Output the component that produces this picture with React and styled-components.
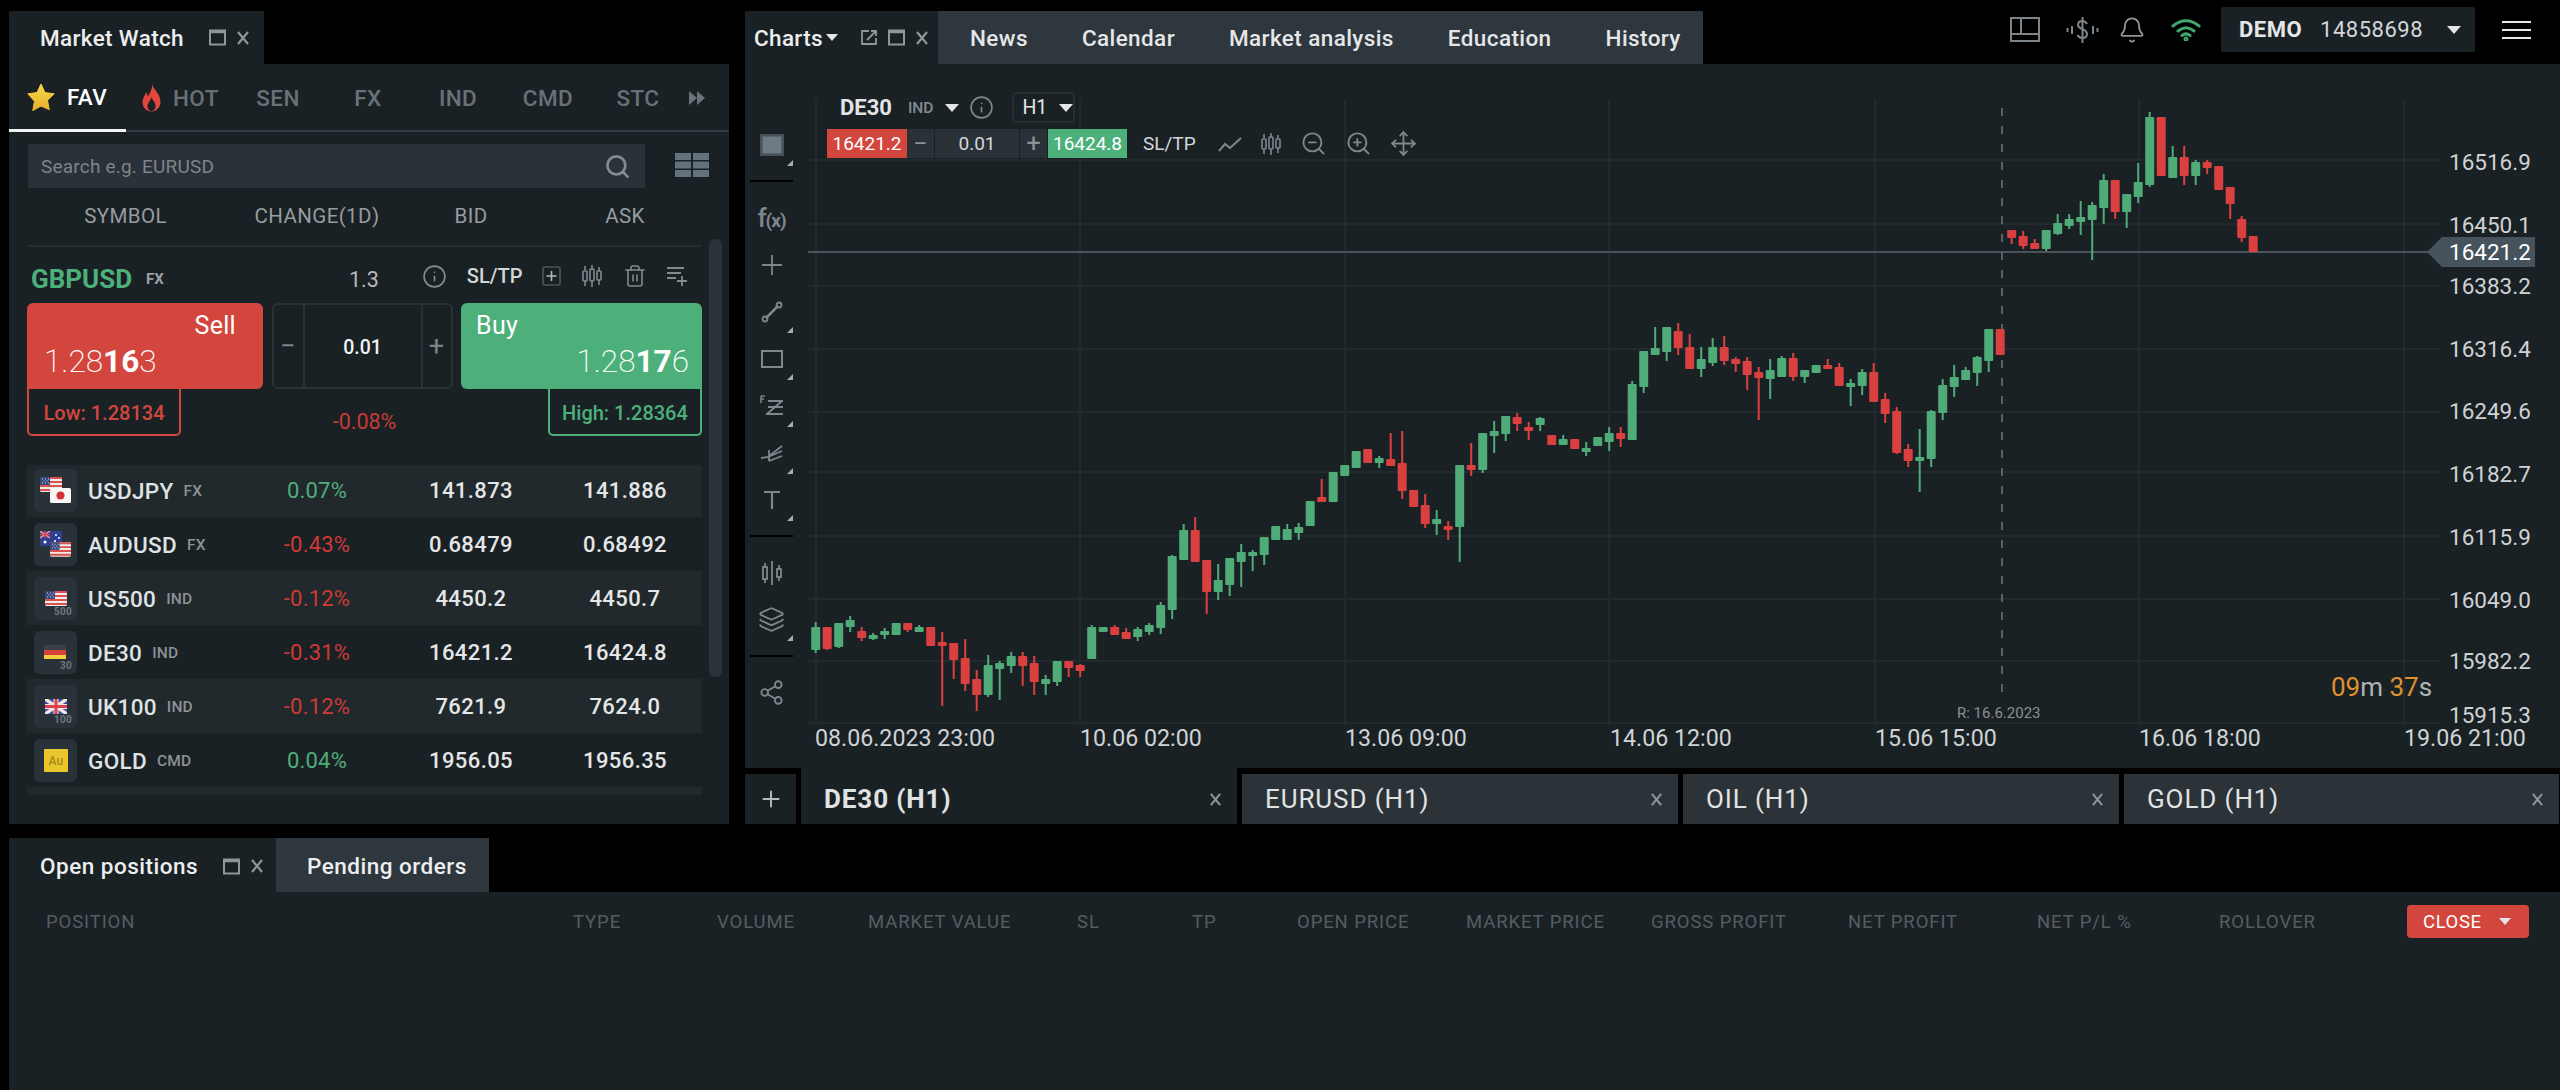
import React from 'react';
import styled, { createGlobalStyle } from 'styled-components';
import { Search, Info, Trash2, Bell, Layers, ZoomIn, ZoomOut, Move, Share2, Plus } from 'lucide-react';

const RED = '#d2463e';
const GREEN = '#4db07b';
const PANEL = '#1a2125';
const STRIP = '#2f373e';

const GlobalStyle = createGlobalStyle`
    html, body {
        margin: 0;
        background: #000;
    }
    body {
        font-family: Roboto, "Liberation Sans", sans-serif;
    }
    * {
        box-sizing: border-box;
    }
`;

const Page = styled.div`
    width: 2560px;
    height: 1090px;
    padding-left: 9px;
    background: #000;
    overflow: hidden;
`;

const TopArea = styled.div`
    display: flex;
    gap: 16px;
    height: 824px;
`;

const MarketColumn = styled.div`
    width: 720px;
    padding-top: 11px;
    display: flex;
    flex-direction: column;
`;

const ChartColumn = styled.div`
    width: 1815px;
    display: flex;
    flex-direction: column;
`;

const WindowTab = styled.div`
    height: 53px;
    width: ${props => props.$width}px;
    padding-left: ${props => props.$pad || 31}px;
    display: flex;
    align-items: center;
    flex-shrink: 0;
    background: ${props => props.$muted ? STRIP : PANEL};
    color: #eceeef;
    font-size: 22.5px;
    font-weight: 500;
    letter-spacing: 0.35px;
`;

const WindowControls = styled.div`
    display: flex;
    align-items: center;
    gap: ${props => props.$gap || 10}px;
    margin-left: ${props => props.$left}px;
    color: #8f9599;
`;

const MarketPanel = styled.div`
    flex: 1;
    background: ${PANEL};
    position: relative;
    display: flex;
    flex-direction: column;
`;

const CategoryTabs = styled.div`
    height: 68px;
    display: flex;
    border-bottom: 2px solid #333c43;
`;

const CategoryTab = styled.div`
    width: ${props => props.$width || 90}px;
    height: 68px;
    display: flex;
    align-items: center;
    justify-content: ${props => props.$left ? 'flex-start' : 'center'};
    gap: 12px;
    padding-left: ${props => props.$pad || 0}px;
    color: ${props => props.$active ? '#fff' : '#697177'};
    border-bottom: ${props => props.$active ? '3px solid #f2f3f4' : 'none'};
    font-size: 22.5px;
    font-weight: 500;
    letter-spacing: 0.4px;
`;

const SearchRow = styled.div`
    display: flex;
    align-items: center;
    padding: 12px 0 0 19px;
`;

const SearchBox = styled.div`
    width: 617px;
    height: 44px;
    padding: 0 14px 0 13px;
    display: flex;
    align-items: center;
    justify-content: space-between;
    background: #2a3138;
    color: #7e858a;
    font-size: 19px;
    letter-spacing: 0.2px;
`;

const GridToggle = styled.svg`
    margin-left: 30px;
    margin-top: -3px;
`;

const QuoteGrid = styled.div`
    display: grid;
    grid-template-columns: 213px 154px 154px 154px;
    align-items: center;
`;

const ColumnHeader = styled(QuoteGrid)`
    height: 59px;
    margin: 0 27px 0 18px;
    width: 675px;
    border-bottom: 2px solid #262e34;
    padding-bottom: 2px;
    color: #969c9f;
    font-size: 20.5px;
    letter-spacing: 0.4px;
    text-align: center;

    & > span:first-child {
        padding-right: 16px;
    }
`;

const ScrollThumb = styled.div`
    position: absolute;
    left: 700px;
    top: 175px;
    width: 13px;
    height: 438px;
    border-radius: 6px;
    background: #2a3339;
`;

const SymbolHead = styled.div`
    height: 56px;
    width: 675px;
    margin-left: 18px;
    padding: 8px 14px 0 4px;
    display: flex;
    align-items: center;
`;

const SymbolName = styled.div`
    color: ${GREEN};
    font-size: 26px;
    font-weight: 700;
    width: 115px;
`;

const SymbolTag = styled.div`
    color: #9aa0a3;
    font-size: 15px;
    font-weight: 700;
    width: 203px;
`;

const Spread = styled.div`
    color: #b6babc;
    font-size: 21.5px;
    width: 73px;
`;

const HeadTools = styled.div`
    display: flex;
    align-items: center;
    flex: 1;
    justify-content: space-between;
    color: #838a8f;
    margin-top: -6px;
`;

const SlTp = styled.span`
    color: #d4d7d8;
    font-size: 20px;
    font-weight: 500;
`;

const TradeRow = styled.div`
    width: 675px;
    margin-left: 18px;
    display: flex;
    justify-content: space-between;
`;

const TradeButton = styled.div`
    height: 86px;
    width: ${props => props.$buy ? 241 : 236}px;
    padding: ${props => props.$buy ? '7px 13px 0 15px' : '7px 27px 0 17px'};
    display: flex;
    flex-direction: column;
    background: ${props => props.$buy ? GREEN : RED};
    border-radius: ${props => props.$buy ? '6px 6px 0 6px' : '6px 6px 6px 0'};
    color: #fff;
`;

const TradeLabel = styled.div`
    font-size: 25px;
    line-height: 32px;
    text-align: ${props => props.$buy ? 'left' : 'right'};
    letter-spacing: 0.3px;
`;

const TradePrice = styled.div`
    font-size: 31.5px;
    line-height: 40px;
    font-weight: 200;
    text-align: ${props => props.$buy ? 'right' : 'left'};

    b {
        font-weight: 700;
    }
`;

const Stepper = styled.div`
    width: 181px;
    height: 86px;
    display: grid;
    grid-template-columns: 29px 1fr 28px;
    align-items: center;
    text-align: center;
    border: 2px solid #2a3238;
    border-radius: 6px;
    color: #7c8388;
    font-size: 27px;
`;

const StepperValue = styled.div`
    height: 100%;
    display: flex;
    align-items: center;
    justify-content: center;
    padding-top: 3px;
    border-left: 2px solid #2a3238;
    border-right: 2px solid #2a3238;
    color: #f1f2f3;
    font-size: 19.5px;
    font-weight: 500;
`;

const RangeRow = styled.div`
    width: 675px;
    margin-left: 18px;
    height: 47px;
    display: flex;
    justify-content: space-between;
`;

const RangeBox = styled.div`
    width: 154px;
    display: flex;
    align-items: center;
    justify-content: center;
    border: 2px solid ${props => props.$color};
    border-top: none;
    border-radius: 0 0 5px 5px;
    color: ${props => props.$color};
    font-size: 20px;
    font-weight: 500;
    padding-top: 3px;
`;

const DayChange = styled.div`
    color: #c93a34;
    font-size: 21.5px;
    padding-top: 20px;
`;

const QuoteList = styled.div`
    height: 330px;
    width: 675px;
    margin: 29px 0 0 18px;
    overflow: hidden;
`;

const QuoteRows = styled.div`
    margin-top: -2px;
`;

const QuoteRow = styled(QuoteGrid)`
    height: 54px;
    padding-top: 1px;
    background: ${props => props.$odd ? '#21292d' : 'transparent'};
    text-align: center;
    font-size: 22px;
`;

const QuoteSymbol = styled.div`
    display: flex;
    align-items: center;
    padding-left: 7px;
    color: #dfe1e3;
    font-size: 22.5px;
    font-weight: 500;
    letter-spacing: 0.3px;
`;

const QuoteIcon = styled.div`
    width: 43px;
    height: 43px;
    margin-right: 11px;
    border-radius: 6px;
    background: #2a3239;
    flex-shrink: 0;
`;

const QuoteTag = styled.span`
    margin-left: 10px;
    color: #8c9295;
    font-size: 15.5px;
    font-weight: 500;
    letter-spacing: 0.2px;
`;

const QuoteChange = styled.div`
    color: ${props => props.$up ? '#4fae79' : '#cf3a36'};
    letter-spacing: 0.2px;
`;

const QuotePrice = styled.div`
    color: #e4e6e7;
    font-weight: 500;
    letter-spacing: 0.4px;
`;

const ChartHeader = styled.div`
    height: 64px;
    display: flex;
    align-items: flex-end;
`;

const NewsStrip = styled.div`
    height: 53px;
    width: 765px;
    padding-left: 32px;
    display: flex;
    align-items: center;
    gap: 54px;
    background: ${STRIP};
    color: #e4e6e8;
    font-size: 22.5px;
    font-weight: 500;
    letter-spacing: 0.4px;
`;

const AccountTools = styled.div`
    align-self: flex-start;
    margin-left: auto;
    padding-top: 7px;
    display: flex;
    align-items: center;
    height: 52px;
`;

const AccountBox = styled.div`
    width: 254px;
    height: 45px;
    margin-left: 20px;
    padding-left: 18px;
    display: flex;
    align-items: center;
    background: ${PANEL};
    border-radius: 3px 3px 0 0;
    color: #d5d8da;
    font-size: 22px;
    letter-spacing: 0.5px;

    b {
        font-weight: 700;
        font-size: 22px;
        margin-right: 18px;
        color: #e4e6e7;
    }
`;

const Hamburger = styled.div`
    width: 29px;
    margin: 0 29px 0 27px;
    display: flex;
    flex-direction: column;
    gap: 6px;

    i {
        display: block;
        height: 2px;
        background: #e6e8e9;
    }
`;

const ChartBody = styled.div`
    height: 704px;
    display: flex;
    background: ${PANEL};
`;

const ToolRail = styled.div`
    width: 61px;
    padding: 57px 0 0 5px;
    flex-shrink: 0;
    color: #7f878c;
`;

const ToolButton = styled.div`
    position: relative;
    width: 43px;
    height: 47px;
    display: flex;
    align-items: center;
    justify-content: center;
    color: #7f878c;
    font-size: 21px;
    font-weight: 500;

    &::after {
        content: '';
        display: ${props => props.$corner ? 'block' : 'none'};
        position: absolute;
        right: 0;
        bottom: 2px;
        width: 6px;
        height: 6px;
        background: #a7adb0;
        clip-path: polygon(100% 0, 100% 100%, 0 100%);
    }
`;

const RailSeparator = styled.div`
    width: 43px;
    height: 2px;
    margin: 12px 0;
    background: #000;
`;

const ChartCanvas = styled.div`
    position: relative;
    flex: 1;

    svg {
        display: block;
    }
`;

const ChartOverlay = styled.div`
    position: absolute;
    left: 21px;
    top: 28px;
    display: flex;
    flex-direction: column;
    gap: 6px;
    color: #d4d7d9;
`;

const OverlayTitle = styled.div`
    height: 31px;
    padding-left: 13px;
    display: flex;
    align-items: center;
    font-size: 22px;
    font-weight: 700;
    color: #e2e4e6;
`;

const OverlayTag = styled.span`
    margin-left: 16px;
    color: #868c90;
    font-size: 15.5px;
    font-weight: 500;
`;

const Caret = styled.span`
    display: inline-block;
    width: 0;
    height: 0;
    margin-left: ${props => props.$left || 0}px;
    border-left: ${props => props.$size || 7}px solid transparent;
    border-right: ${props => props.$size || 7}px solid transparent;
    border-top: ${props => (props.$size || 7) + 1}px solid ${props => props.$color || '#e3e5e6'};
`;

const OverlayInfo = styled(Info)`
    margin-left: 10px;
    color: #7f878c;
`;

const IntervalBox = styled.div`
    width: 63px;
    height: 31px;
    margin-left: 18px;
    padding-left: 8px;
    display: flex;
    align-items: center;
    border: 2px solid #262e33;
    border-radius: 4px;
    font-size: 19.5px;
    font-weight: 400;
`;

const OverlayPrices = styled.div`
    height: 29px;
    display: flex;
    align-items: center;
    font-size: 19px;
`;

const OverlayPrice = styled.div`
    width: ${props => props.$buy ? 79 : 80}px;
    height: 29px;
    line-height: 29px;
    text-align: center;
    background: ${props => props.$buy ? GREEN : RED};
    color: #fff;
`;

const OverlayStep = styled.div`
    width: ${props => props.$wide ? 84 : 27}px;
    height: 29px;
    line-height: 29px;
    margin-right: 1px;
    text-align: center;
    background: #2a3238;
    color: ${props => props.$wide ? '#d4d7d9' : '#8d9498'};
    font-size: ${props => props.$wide ? 19 : 25}px;
`;

const OverlaySlTp = styled.div`
    margin: 0 22px 0 16px;
    font-size: 19px;
`;

const OverlayTools = styled.div`
    display: flex;
    align-items: center;
    gap: 18px;
    color: #7f878c;
`;

const ChartTabs = styled.div`
    height: 56px;
    display: flex;
    align-items: flex-end;
    gap: 5px;
`;

const AddChart = styled.div`
    width: 51px;
    height: 50px;
    display: flex;
    align-items: center;
    justify-content: center;
    background: ${PANEL};
    color: #b6babd;
`;

const ChartTab = styled.div`
    width: ${props => props.$width || 436}px;
    height: ${props => props.$active ? 56 : 50}px;
    padding: ${props => props.$active ? '6px 15px 0 23px' : '0 15px 0 23px'};
    display: flex;
    align-items: center;
    justify-content: space-between;
    background: ${props => props.$active ? PANEL : '#2b3238'};
    color: #e0e3e4;
    font-size: 26px;
    font-weight: ${props => props.$active ? 700 : 400};
    letter-spacing: 0.9px;
`;

const BottomArea = styled.div`
    margin-top: 14px;
`;

const BottomTabs = styled.div`
    height: 54px;
    display: flex;
`;

const BottomTab = styled(WindowTab)`
    height: 54px;
    padding-top: 2px;
    letter-spacing: 0.5px;
`;

const PositionsPanel = styled.div`
    height: 198px;
    padding: 13px 0 0 37px;
    background: ${PANEL};
`;

const PositionsHeader = styled.div`
    display: grid;
    grid-template-columns: 527px 144px 151px 209px 115px 105px 169px 185px 197px 189px 182px 188px 122px;
    align-items: center;
    color: #565d61;
    font-size: 18.5px;
    letter-spacing: 0.9px;
`;

const CloseButton = styled.div`
    height: 33px;
    width: 122px;
    padding-left: 16px;
    display: flex;
    align-items: center;
    gap: 17px;
    border-radius: 4px;
    background: ${RED};
    color: #fff;
    font-size: 18.5px;
    letter-spacing: 0.6px;
`;

const MaxIcon = () => (
    <svg width="17" height="17" viewBox="0 0 17 17" fill="none" stroke="currentColor">
        <rect x="1" y="1.5" width="15" height="14" strokeWidth="2" />
        <path d="M1 3h15" strokeWidth="2.5" />
    </svg>
);

const CloseIcon = ({ size = 14 }) => (
    <svg width={size} height={size} viewBox="0 0 14 14" fill="none" stroke="currentColor" strokeWidth="2.2">
        <path d="M2 1l10 12M12 1L2 13" />
    </svg>
);

const PopoutIcon = () => (
    <svg width="18" height="17" viewBox="0 0 18 17" fill="none" stroke="currentColor" strokeWidth="1.8">
        <path d="M9 2H2v13h14V9" />
        <path d="M7 11L16 2M11 2h5v5" />
    </svg>
);

const StarIcon = () => (
    <svg width="28" height="28" viewBox="0 0 28 28">
        <defs>
            <linearGradient id="starFill" x1="0" y1="0" x2="0" y2="1">
                <stop offset="0" stopColor="#f9d649" />
                <stop offset="1" stopColor="#e7b02c" />
            </linearGradient>
        </defs>
        <path d="M14 1l4 8.6 9.2 1.2-6.7 6.5 1.8 9.4L14 23.1l-8.3 4.6 1.8-9.4L.8 10.8 10 9.6z" fill="url(#starFill)" stroke="url(#starFill)" strokeLinejoin="round" />
    </svg>
);

const FlameIcon = () => (
    <svg width="19" height="28" viewBox="0 0 19 28">
        <path d="M10 0c1 5 8 9 8.5 17 .3 6-4 10.5-9 10.5S.5 23.5.5 18c0-4 2.5-6 3.5-10 1 1.5 1.5 3 1.8 4.5C8 9 10.5 5 10 0z" fill="#e2463c" />
        <path d="M9.5 13c.5 3 4 5 4 9 0 3-2 5-4 5s-4-2-4-5c0-3 3-5 4-9z" fill={PANEL} />
    </svg>
);

const MoreArrows = () => (
    <svg width="16" height="16" viewBox="0 0 16 16" fill="#6b7379">
        <path d="M0 1l8 7-8 7zM8 1l8 7-8 7z" />
    </svg>
);

const PlusBox = () => (
    <svg width="19" height="20" viewBox="0 0 19 20" fill="none" stroke="currentColor" strokeWidth="1.6">
        <rect x="1" y="1" width="17" height="18" rx="2" stroke="#4c555b" />
        <path d="M9.5 5v10M4.5 10h10" stroke="#b5babd" />
    </svg>
);

const CandlesIcon = ({ width = 22, height = 22 }) => (
    <svg width={width} height={height} viewBox="0 0 22 22" fill="none" stroke="currentColor" strokeWidth="1.6">
        <path d="M4 1v4M4 16v5M11 0v5M11 16v6M18 2v4M18 15v5" />
        <rect x="2" y="6" width="4" height="10" rx="1" />
        <rect x="9" y="4" width="4" height="12" rx="1" />
        <rect x="16" y="6" width="4" height="9" rx="1" />
    </svg>
);

const ListAddIcon = () => (
    <svg width="21" height="20" viewBox="0 0 21 20" fill="none" stroke="currentColor" strokeWidth="1.8">
        <path d="M0 2h17M0 7h14M0 12h9M15 10v10M10 15h10" />
    </svg>
);

const GridIcon = () => (
    <GridToggle width="34" height="24" viewBox="0 0 34 24" fill="#64727e">
        <rect width="16" height="7" />
        <rect x="18" width="16" height="7" />
        <rect y="8.5" width="16" height="7" />
        <rect x="18" y="8.5" width="16" height="7" />
        <rect y="17" width="16" height="7" />
        <rect x="18" y="17" width="16" height="7" />
    </GridToggle>
);

const UsFlag = ({ x, y, w = 22, h = 15 }) => (
    <svg x={x} y={y} width={w} height={h} viewBox="0 0 22 15">
        <rect width="22" height="15" rx="1.5" fill="#f3e9e6" />
        <path d="M0 1h22M0 5h22M0 9h22M0 13h22" stroke="#d8524f" strokeWidth="2" />
        <rect width="10" height="8" fill="#39477f" />
        <path d="M2 2h1M5 2h1M8 2h1M3.5 4h1M6.5 4h1M2 6h1M5 6h1M8 6h1" stroke="#d9dcec" strokeWidth="1" />
    </svg>
);

const JpFlag = ({ x, y }) => (
    <svg x={x} y={y} width="21" height="15" viewBox="0 0 21 15">
        <rect width="21" height="15" rx="1.5" fill="#f7f7f7" />
        <circle cx="10.5" cy="7.5" r="4" fill="#d5333a" />
    </svg>
);

const AuFlag = ({ x, y }) => (
    <svg x={x} y={y} width="22" height="15" viewBox="0 0 22 15">
        <rect width="22" height="15" rx="1.5" fill="#303f8f" />
        <path d="M0 0l10 7M10 0L0 7" stroke="#e8a0a0" strokeWidth="1.5" />
        <path d="M5 0v7M0 3.5h10" stroke="#e8414a" strokeWidth="1.5" />
        <circle cx="16" cy="4" r="1" fill="#fff" />
        <circle cx="19" cy="7" r="1" fill="#fff" />
        <circle cx="15" cy="10" r="1" fill="#fff" />
        <circle cx="5" cy="11" r="1.5" fill="#fff" />
    </svg>
);

const DeFlag = ({ x, y }) => (
    <svg x={x} y={y} width="22" height="14" viewBox="0 0 22 14">
        <rect width="22" height="5" fill="#3a4147" />
        <rect y="5" width="22" height="5" fill="#d7403b" />
        <rect y="10" width="22" height="4" fill="#f4cf3c" />
    </svg>
);

const UkFlag = ({ x, y }) => (
    <svg x={x} y={y} width="22" height="15" viewBox="0 0 22 15">
        <rect width="22" height="15" fill="#3d4f9c" />
        <path d="M0 0l22 15M22 0L0 15" stroke="#f2e2e2" strokeWidth="3.5" />
        <path d="M11 0v15M0 7.5h22" stroke="#f2e2e2" strokeWidth="5" />
        <path d="M11 0v15M0 7.5h22" stroke="#d8414a" strokeWidth="3" />
    </svg>
);

const IndexLabel = ({ value }) => (
    <text x="38" y="38" textAnchor="end" fontSize="10" fontWeight="700" fill="#6f777b">{value}</text>
);

const flags = {
    USDJPY: <><UsFlag x="6" y="8" /><JpFlag x="16" y="19" /></>,
    AUDUSD: <><AuFlag x="6" y="8" /><UsFlag x="16" y="19" w="21" /></>,
    US500: <><UsFlag x="11" y="14" /><IndexLabel value="500" /></>,
    DE30: <><DeFlag x="10" y="14" /><IndexLabel value="30" /></>,
    UK100: <><UkFlag x="11" y="14" /><IndexLabel value="100" /></>,
    GOLD: (
        <>
            <rect x="10" y="10" width="24" height="23" rx="1" fill="#e8c72e" />
            <text x="22" y="26" textAnchor="middle" fontSize="12" fontWeight="500" fill="#a9871c">Au</text>
        </>
    ),
};

const quotes = [
    { name: 'USDJPY', tag: 'FX', change: '0.07%', up: true, bid: '141.873', ask: '141.886' },
    { name: 'AUDUSD', tag: 'FX', change: '-0.43%', bid: '0.68479', ask: '0.68492' },
    { name: 'US500', tag: 'IND', change: '-0.12%', bid: '4450.2', ask: '4450.7' },
    { name: 'DE30', tag: 'IND', change: '-0.31%', bid: '16421.2', ask: '16424.8' },
    { name: 'UK100', tag: 'IND', change: '-0.12%', bid: '7621.9', ask: '7624.0' },
    { name: 'GOLD', tag: 'CMD', change: '0.04%', up: true, bid: '1956.05', ask: '1956.35' },
];

// one entry per candle: colour, wick top, body top, body bottom, wick bottom (page px)
const candles = [
    ['g', 622, 627, 650, 653], ['r', 627, 627, 649, 650], ['g', 623, 623, 647, 648], ['g', 616, 620, 627, 632],
    ['r', 627, 631, 638, 641], ['g', 633, 635, 639, 640], ['g', 628, 631, 635, 639], ['g', 623, 623, 635, 635],
    ['r', 623, 623, 630, 632], ['g', 625, 627, 632, 632], ['r', 627, 627, 646, 646], ['r', 632, 642, 646, 706],
    ['r', 643, 643, 660, 679], ['r', 639, 658, 684, 691], ['r', 670, 679, 695, 711], ['g', 655, 665, 695, 697],
    ['g', 661, 663, 669, 700], ['g', 652, 656, 666, 673], ['r', 652, 656, 666, 686], ['r', 656, 663, 682, 695],
    ['g', 675, 679, 684, 695], ['g', 661, 661, 682, 686], ['r', 661, 661, 668, 677], ['r', 664, 665, 671, 677],
    ['g', 625, 627, 659, 659], ['g', 627, 627, 632, 632], ['r', 625, 627, 635, 635], ['r', 628, 632, 639, 639],
    ['g', 627, 629, 637, 641], ['g', 623, 625, 632, 635], ['g', 602, 605, 628, 634], ['g', 555, 556, 610, 619],
    ['g', 524, 530, 560, 560], ['r', 517, 530, 562, 562], ['r', 560, 560, 592, 614], ['g', 564, 580, 592, 600],
    ['g', 558, 558, 585, 596], ['g', 544, 552, 562, 587], ['g', 550, 552, 556, 571], ['g', 537, 537, 555, 565],
    ['g', 526, 526, 540, 540], ['g', 524, 529, 540, 540], ['g', 523, 527, 533, 540], ['g', 501, 501, 526, 526],
    ['r', 479, 497, 502, 502], ['g', 472, 472, 502, 502], ['g', 465, 465, 476, 476], ['g', 451, 451, 468, 468],
    ['r', 449, 449, 463, 463], ['g', 456, 458, 463, 468], ['r', 433, 459, 466, 466], ['r', 431, 463, 491, 499],
    ['r', 490, 490, 507, 507], ['r', 494, 505, 524, 528], ['g', 510, 519, 524, 535], ['r', 521, 526, 526, 540],
    ['g', 465, 465, 527, 562], ['r', 443, 465, 470, 476], ['g', 433, 433, 470, 473], ['g', 421, 431, 436, 453],
    ['g', 416, 416, 434, 441], ['r', 413, 417, 424, 431], ['r', 422, 427, 427, 440], ['g', 417, 418, 425, 431],
    ['r', 435, 435, 445, 445], ['g', 435, 439, 445, 445], ['r', 439, 439, 449, 449], ['g', 442, 448, 448, 456],
    ['g', 437, 437, 446, 446], ['g', 427, 433, 442, 451], ['r', 427, 433, 439, 447], ['g', 381, 384, 440, 440],
    ['g', 351, 351, 387, 393], ['g', 327, 348, 355, 355], ['g', 327, 327, 352, 361], ['r', 323, 331, 348, 355],
    ['r', 334, 347, 369, 369], ['g', 347, 359, 369, 377], ['g', 338, 347, 363, 366], ['r', 336, 347, 361, 365],
    ['r', 357, 359, 364, 372], ['r', 357, 361, 375, 390], ['r', 367, 372, 378, 420], ['g', 359, 370, 379, 399],
    ['g', 356, 358, 377, 377], ['r', 353, 358, 377, 381], ['g', 370, 370, 377, 383], ['g', 365, 365, 373, 373],
    ['r', 359, 365, 369, 369], ['r', 363, 367, 386, 386], ['g', 379, 383, 387, 406], ['g', 369, 372, 386, 395],
    ['r', 363, 372, 402, 402], ['r', 393, 399, 414, 423], ['r', 407, 411, 453, 454], ['r', 444, 449, 461, 467],
    ['g', 429, 457, 461, 492], ['g', 410, 411, 459, 467], ['g', 379, 385, 413, 420], ['g', 365, 377, 387, 397],
    ['g', 367, 370, 380, 380], ['g', 356, 357, 373, 386], ['g', 329, 329, 361, 372], ['r', 329, 329, 355, 355],
    ['r', 230, 230, 238, 244], ['r', 231, 236, 246, 249], ['r', 239, 243, 249, 249], ['g', 230, 230, 249, 251],
    ['g', 214, 223, 234, 235], ['g', 214, 219, 226, 229], ['g', 201, 217, 222, 235], ['g', 202, 205, 220, 260],
    ['g', 174, 180, 208, 224], ['r', 180, 180, 212, 219], ['g', 194, 194, 212, 228], ['g', 163, 182, 197, 203],
    ['g', 112, 117, 185, 187], ['r', 117, 117, 176, 176], ['g', 146, 157, 178, 178], ['r', 146, 157, 176, 185],
    ['g', 160, 162, 176, 185], ['r', 160, 162, 168, 174], ['r', 166, 166, 190, 190], ['r', 187, 187, 204, 219],
    ['r', 216, 219, 238, 242], ['r', 236, 236, 252, 252],
];

const gridRows = [160, 224, 286, 349, 412, 472, 536, 599, 661, 723];
const gridColumns = [816, 1080, 1345, 1609, 1875, 2139, 2404];
const priceLabels = [
    [162, '16516.9'], [225, '16450.1'], [286, '16383.2'], [349, '16316.4'], [411, '16249.6'],
    [474, '16182.7'], [537, '16115.9'], [600, '16049.0'], [661, '15982.2'], [715, '15915.3'],
];
const timeLabels = [
    [815, '08.06.2023 23:00'], [1080, '10.06 02:00'], [1345, '13.06 09:00'], [1610, '14.06 12:00'],
    [1875, '15.06 15:00'], [2139, '16.06 18:00'], [2404, '19.06 21:00'],
];

const PriceChart = () => (
    <svg width="1754" height="704" viewBox="806 64 1754 704" fontFamily="Roboto, sans-serif">
        {gridRows.map(y => <path key={y} d={`M808 ${y}H2440`} stroke="#222a2e" strokeWidth="2" />)}
        {gridColumns.map(x => <path key={x} d={`M${x} 100V725`} stroke="#222a2e" strokeWidth="2" />)}
        <path d="M808 252H2430" stroke="#4a545b" strokeWidth="2" />
        <path d="M2002 108V700" stroke="#5a6268" strokeWidth="2" strokeDasharray="8 10" />
        {candles.map(([color, wickTop, top, bottom, wickBottom], i) => {
            const x = 815.7 + i * 11.5;
            const fill = color === 'g' ? '#4fab78' : '#d9403f';
            return (
                <g key={i} fill={fill}>
                    <rect x={x - 1} y={wickTop} width="2" height={wickBottom - wickTop} />
                    <rect x={x - 4.5} y={top} width="9" height={Math.max(bottom - top, 4)} rx="1" />
                </g>
            );
        })}
        <path d="M2427 252l15-15h93v30h-93z" fill="#46525c" />
        {priceLabels.map(([y, label]) => (
            <text key={label} x="2449" y={y + 8} fontSize="22.5" fill="#cfd2d4">{label}</text>
        ))}
        <text x="2449" y="260" fontSize="22.5" fill="#fff">16421.2</text>
        {timeLabels.map(([x, label]) => (
            <text key={label} x={x} y="746" fontSize="23.2" fill="#d0d3d5">{label}</text>
        ))}
        <text x="1957" y="718" fontSize="15" fill="#8a8f92">R: 16.6.2023</text>
        <text x="2331" y="696" fontSize="26" fill="#aeb3b6">
            <tspan fill="#e0912d">09</tspan>m <tspan fill="#e0912d">37</tspan>s
        </text>
    </svg>
);

const LayoutIcon = () => (
    <svg width="30" height="25" viewBox="0 0 30 25" fill="none" stroke="#7d858a" strokeWidth="2">
        <rect x="1" y="1" width="28" height="23" />
        <path d="M1 17h28M11 1v16" />
    </svg>
);

const DollarIcon = () => (
    <svg width="33" height="26" viewBox="0 0 33 26" fill="none" stroke="#7d858a" strokeWidth="2">
        <path d="M21 7c-1-2-2.5-3-4.5-3-3 0-4.5 1.5-4.5 4 0 5 9 3 9 9 0 2.5-2 4-4.5 4-2.5 0-4-1-5-3M16.5 0v26" />
        <path d="M6 9v8M1.5 11v4M27 9v8M31.5 11v4" />
    </svg>
);

const WifiIcon = () => (
    <svg width="30" height="23" viewBox="0 0 30 23" fill="none" stroke="#43a56f" strokeWidth="3" strokeLinecap="round">
        <path d="M2 8c8-7 18-7 26 0M7 13c5-4 11-4 16 0M11 17.5c2.5-2 5.5-2 8 0" />
        <circle cx="15" cy="21" r="1" />
    </svg>
);

const FormulaMark = styled.span`
    font-size: 26px;
    letter-spacing: -1px;

    small {
        font-size: 19px;
        font-weight: 700;
    }
`;

const DrawingIcon = ({ children }) => (
    <svg width="24" height="24" viewBox="0 0 24 24" fill="none" stroke="currentColor" strokeWidth="1.8">
        {children}
    </svg>
);

const RailTools = () => (
    <ToolRail>
        <ToolButton $corner>
            <svg width="24" height="22" viewBox="0 0 24 22">
                <rect x="1" y="1" width="22" height="20" fill="#6d7a85" stroke="#465057" strokeWidth="3" />
            </svg>
        </ToolButton>
        <RailSeparator />
        <ToolButton><FormulaMark>f<small>(x)</small></FormulaMark></ToolButton>
        <ToolButton><DrawingIcon><path d="M2 12h20M12 2v20" /></DrawingIcon></ToolButton>
        <ToolButton $corner>
            <DrawingIcon>
                <path d="M6 18L18 6" strokeWidth="2.5" />
                <circle cx="5" cy="19" r="2.5" />
                <circle cx="19" cy="5" r="2.5" />
            </DrawingIcon>
        </ToolButton>
        <ToolButton $corner><DrawingIcon><rect x="2" y="4" width="20" height="16" strokeWidth="2" /></DrawingIcon></ToolButton>
        <ToolButton $corner>
            <DrawingIcon>
                <path d="M8 7h15M8 13h15M6 20h17M7 20L22 7" />
                <path d="M1 2h4M1 2v7M1 5h3" strokeWidth="1.5" />
            </DrawingIcon>
        </ToolButton>
        <ToolButton $corner><DrawingIcon><path d="M1 17l7-1 14-11M8 16l14-6M9 20l13-5M9 9v11" /></DrawingIcon></ToolButton>
        <ToolButton $corner><DrawingIcon><path d="M4 4h16M12 4v17" strokeWidth="2.2" /></DrawingIcon></ToolButton>
        <RailSeparator />
        <ToolButton>
            <DrawingIcon>
                <path d="M12 0v24M5 2v4M5 18v4M19 4v4M19 16v4" />
                <rect x="3" y="6" width="4" height="12" />
                <rect x="17" y="8" width="4" height="8" />
            </DrawingIcon>
        </ToolButton>
        <ToolButton $corner><Layers size={27} strokeWidth={1.6} /></ToolButton>
        <RailSeparator />
        <ToolButton><Share2 size={27} strokeWidth={1.6} /></ToolButton>
    </ToolRail>
);

const App = () => (
    <Page>
        <GlobalStyle />
        <TopArea>
            <MarketColumn>
                <WindowTab $width={255}>
                    Market Watch
                    <WindowControls $left={25}><MaxIcon /><CloseIcon /></WindowControls>
                </WindowTab>
                <MarketPanel>
                    <CategoryTabs>
                        <CategoryTab $active $left $width={117} $pad={18}><StarIcon />FAV</CategoryTab>
                        <CategoryTab $left $width={107} $pad={16}><FlameIcon />HOT</CategoryTab>
                        <CategoryTab>SEN</CategoryTab>
                        <CategoryTab>FX</CategoryTab>
                        <CategoryTab>IND</CategoryTab>
                        <CategoryTab>CMD</CategoryTab>
                        <CategoryTab>STC</CategoryTab>
                        <CategoryTab $width={28}><MoreArrows /></CategoryTab>
                    </CategoryTabs>
                    <SearchRow>
                        <SearchBox>
                            Search e.g. EURUSD
                            <Search size={27} strokeWidth={2.4} color="#858c91" />
                        </SearchBox>
                        <GridIcon />
                    </SearchRow>
                    <ColumnHeader>
                        <span>SYMBOL</span>
                        <span>CHANGE(1D)</span>
                        <span>BID</span>
                        <span>ASK</span>
                    </ColumnHeader>
                    <ScrollThumb />
                    <SymbolHead>
                        <SymbolName>GBPUSD</SymbolName>
                        <SymbolTag>FX</SymbolTag>
                        <Spread>1.3</Spread>
                        <HeadTools>
                            <Info size={25} strokeWidth={1.6} />
                            <SlTp>SL/TP</SlTp>
                            <PlusBox />
                            <CandlesIcon />
                            <Trash2 size={24} strokeWidth={1.6} />
                            <ListAddIcon />
                        </HeadTools>
                    </SymbolHead>
                    <TradeRow>
                        <TradeButton>
                            <TradeLabel>Sell</TradeLabel>
                            <TradePrice>1.28<b>16</b>3</TradePrice>
                        </TradeButton>
                        <Stepper>
                            <span>−</span>
                            <StepperValue>0.01</StepperValue>
                            <span>+</span>
                        </Stepper>
                        <TradeButton $buy>
                            <TradeLabel $buy>Buy</TradeLabel>
                            <TradePrice $buy>1.28<b>17</b>6</TradePrice>
                        </TradeButton>
                    </TradeRow>
                    <RangeRow>
                        <RangeBox $color={RED}>Low: 1.28134</RangeBox>
                        <DayChange>-0.08%</DayChange>
                        <RangeBox $color={GREEN}>High: 1.28364</RangeBox>
                    </RangeRow>
                    <QuoteList>
                        <QuoteRows>
                            {quotes.map((quote, i) => (
                                <QuoteRow key={quote.name} $odd={i % 2 === 0}>
                                    <QuoteSymbol>
                                        <QuoteIcon>
                                            <svg width="43" height="43" viewBox="0 0 43 43" fontFamily="Roboto, sans-serif">{flags[quote.name]}</svg>
                                        </QuoteIcon>
                                        {quote.name}
                                        <QuoteTag>{quote.tag}</QuoteTag>
                                    </QuoteSymbol>
                                    <QuoteChange $up={quote.up}>{quote.change}</QuoteChange>
                                    <QuotePrice>{quote.bid}</QuotePrice>
                                    <QuotePrice>{quote.ask}</QuotePrice>
                                </QuoteRow>
                            ))}
                            <QuoteRow $odd />
                        </QuoteRows>
                    </QuoteList>
                </MarketPanel>
            </MarketColumn>
            <ChartColumn>
                <ChartHeader>
                    <WindowTab $width={193} $pad={9}>
                        Charts
                        <Caret $left={3} $size={6} />
                        <WindowControls $left={22}><PopoutIcon /><MaxIcon /><CloseIcon /></WindowControls>
                    </WindowTab>
                    <NewsStrip>
                        <span>News</span>
                        <span>Calendar</span>
                        <span>Market analysis</span>
                        <span>Education</span>
                        <span>History</span>
                    </NewsStrip>
                    <AccountTools>
                        <LayoutIcon />
                        <WindowControls $left={26} $gap={19}>
                            <DollarIcon />
                            <Bell size={28} strokeWidth={1.6} />
                        </WindowControls>
                        <WindowControls $left={25}><WifiIcon /></WindowControls>
                        <AccountBox>
                            <b>DEMO</b>14858698
                            <Caret $left={24} $size={7} />
                        </AccountBox>
                        <Hamburger><i /><i /><i /></Hamburger>
                    </AccountTools>
                </ChartHeader>
                <ChartBody>
                    <RailTools />
                    <ChartCanvas>
                        <PriceChart />
                        <ChartOverlay>
                            <OverlayTitle>
                                DE30
                                <OverlayTag>IND</OverlayTag>
                                <Caret $left={12} $size={7} />
                                <OverlayInfo size={25} strokeWidth={1.6} />
                                <IntervalBox>H1<Caret $left={12} $size={7} /></IntervalBox>
                            </OverlayTitle>
                            <OverlayPrices>
                                <OverlayPrice>16421.2</OverlayPrice>
                                <OverlayStep>−</OverlayStep>
                                <OverlayStep $wide>0.01</OverlayStep>
                                <OverlayStep>+</OverlayStep>
                                <OverlayPrice $buy>16424.8</OverlayPrice>
                                <OverlaySlTp>SL/TP</OverlaySlTp>
                                <OverlayTools>
                                    <svg width="24" height="16" viewBox="0 0 24 16" fill="none" stroke="currentColor" strokeWidth="2">
                                        <path d="M1 15l6-7 5 4L23 2" />
                                    </svg>
                                    <CandlesIcon width={22} height={28} />
                                    <ZoomOut size={27} strokeWidth={1.7} />
                                    <ZoomIn size={27} strokeWidth={1.7} />
                                    <Move size={27} strokeWidth={1.6} />
                                </OverlayTools>
                            </OverlayPrices>
                        </ChartOverlay>
                    </ChartCanvas>
                </ChartBody>
                <ChartTabs>
                    <AddChart><Plus size={26} strokeWidth={1.8} /></AddChart>
                    <ChartTab $active>DE30 (H1)<WindowControls><CloseIcon size={13} /></WindowControls></ChartTab>
                    <ChartTab>EURUSD (H1)<WindowControls><CloseIcon size={13} /></WindowControls></ChartTab>
                    <ChartTab>OIL (H1)<WindowControls><CloseIcon size={13} /></WindowControls></ChartTab>
                    <ChartTab $width={435}>GOLD (H1)<WindowControls><CloseIcon size={13} /></WindowControls></ChartTab>
                </ChartTabs>
            </ChartColumn>
        </TopArea>
        <BottomArea>
            <BottomTabs>
                <BottomTab $width={267}>
                    Open positions
                    <WindowControls $left={25}><MaxIcon /><CloseIcon /></WindowControls>
                </BottomTab>
                <BottomTab $width={213} $muted>Pending orders</BottomTab>
            </BottomTabs>
            <PositionsPanel>
                <PositionsHeader>
                    <span>POSITION</span>
                    <span>TYPE</span>
                    <span>VOLUME</span>
                    <span>MARKET VALUE</span>
                    <span>SL</span>
                    <span>TP</span>
                    <span>OPEN PRICE</span>
                    <span>MARKET PRICE</span>
                    <span>GROSS PROFIT</span>
                    <span>NET PROFIT</span>
                    <span>NET P/L %</span>
                    <span>ROLLOVER</span>
                    <CloseButton>CLOSE<Caret $size={6} /></CloseButton>
                </PositionsHeader>
            </PositionsPanel>
        </BottomArea>
    </Page>
);

export default App;
